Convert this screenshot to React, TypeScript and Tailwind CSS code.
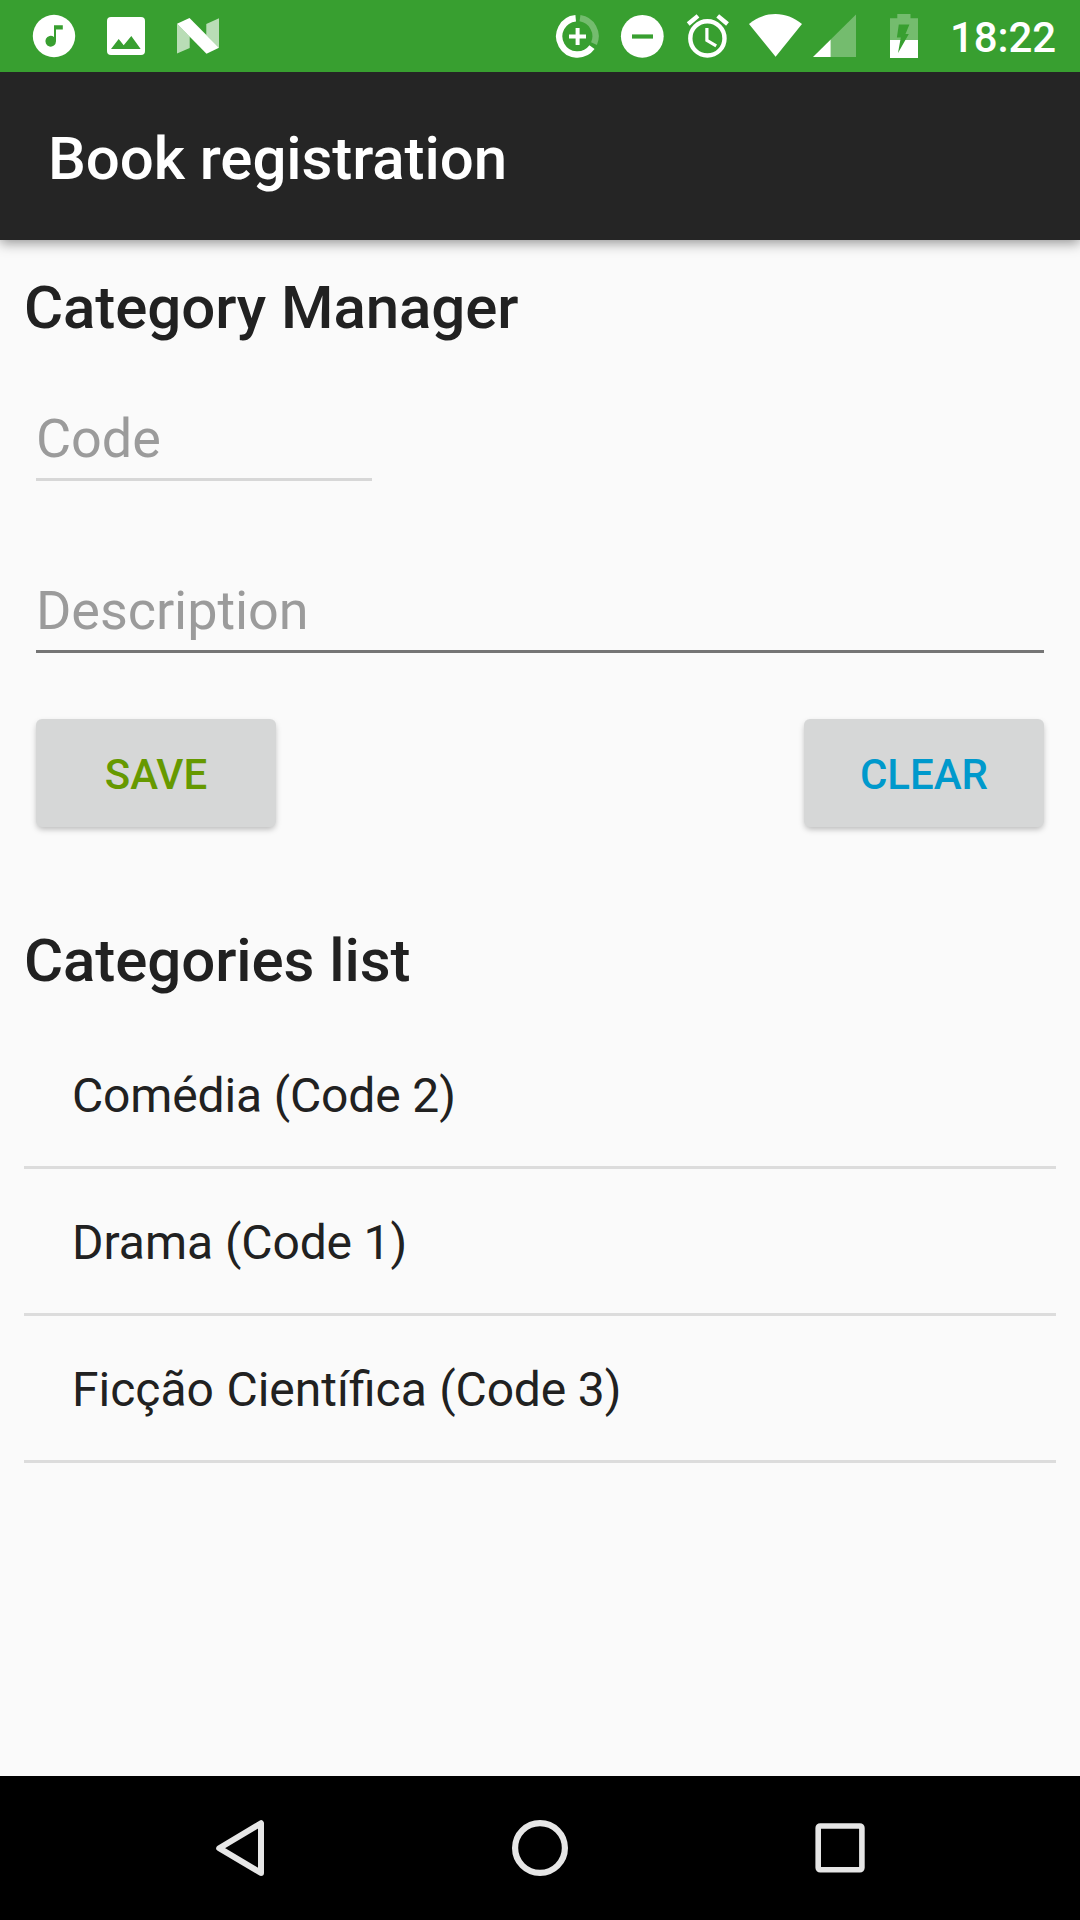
import React from "react";

type IconProps = { x: number; w: number; children: React.ReactNode };

/* Status bar glyph: a full-height slice of the 72px bar, starting at x. */
function StatusIcon({ x, w, children }: IconProps) {
  return (
    <svg width={w} height={72} viewBox={`${x} 0 ${w} 72`} fill="#fff" className="block shrink-0">
      {children}
    </svg>
  );
}

function StatusBar() {
  return (
    <header className="relative z-20 flex h-[72px] items-center justify-between bg-[#389f30] pr-[24px] pl-[32px]">
      <div className="flex gap-[26px]">
        <StatusIcon x={32} w={44}>
          <circle cx="54" cy="36" r="21.2" />
          <path fill="#389f30" d="M54 25.2h8.8v4.2h-6.8v11.9a5.3 5.4 0 1 1-2-4.3z" />
        </StatusIcon>
        <StatusIcon x={102} w={48}>
          <rect x="107" y="17" width="38" height="38" rx="4" />
          <path fill="#389f30" d="M111 49l7.7-10 5 6.3 7.6-9.3 9.4 13z" />
        </StatusIcon>
        <StatusIcon x={176} w={44}>
          <path fillOpacity="0.65" d="M177 23.7V53.5L189.7 48V36.4zM219 18.3L206.3 24V35L219 47.7z" />
          <path d="M177 23.7L189.5 18 219 47.7 206.5 53.7z" />
        </StatusIcon>
      </div>
      <div className="flex items-center">
        <StatusIcon x={555} w={45}>
          <path fill="none" stroke="#fff" strokeWidth="6.4" d="M575.7 18.2A18.2 18.2 0 1 0 592 47.2" />
          <path fill="none" stroke="#fff" strokeOpacity="0.3" strokeWidth="6.4" d="M580 18.2A18.2 18.2 0 0 1 594 43.6" />
          <path d="M575.6 28h4v6.5h6.4v4h-6.4V45h-4v-6.5H569v-4h6.6z" />
        </StatusIcon>
        <StatusIcon x={600} w={84}>
          <circle cx="642.3" cy="36.3" r="21.4" />
          <path fill="#389f30" d="M632 34.4h21v4.2h-21z" />
        </StatusIcon>
        <StatusIcon x={684} w={60}>
          <circle cx="707.4" cy="38.4" r="17.1" fill="none" stroke="#fff" strokeWidth="4.4" />
          <path fill="none" stroke="#fff" strokeWidth="3.2" d="M706.9 28v12.4l9.3 5.4" />
          <path fill="none" stroke="#fff" strokeWidth="4.4" d="M688.2 24l9.8-8.1M717.7 15.9l9.8 8.1" />
        </StatusIcon>
        <StatusIcon x={744} w={62}>
          <path d="M775.6 56.7L749 24C757 17.4 766 14 775.5 14S794 17.4 802 24z" />
        </StatusIcon>
        <StatusIcon x={806} w={60}>
          <path fillOpacity="0.3" d="M830.7 39.5L856 14.5V57H830.7z" />
          <path d="M813 57L830.7 39.5V57z" />
        </StatusIcon>
        <StatusIcon x={866} w={84}>
          <path fillOpacity="0.3" d="M890 40V18.2h7.3V14h13.2v4.2H918V40z" />
          <path d="M890 40h28v18h-28z" />
          <path fill="#389f30" d="M898.8 24.6h10.6L905.5 34h3.3L898 53l2.8-15.4h-3.9z" />
        </StatusIcon>
        <time className="w-[106px] pt-[3px] text-[42px] leading-[48px] font-medium tracking-[-0.1px] whitespace-nowrap text-white">
          18:22
        </time>
      </div>
    </header>
  );
}

function AppBar() {
  return (
    <div className="relative z-10 flex h-[168px] items-center bg-[#252525] px-[48px] pt-[5px] shadow-[0_3px_12px_rgba(0,0,0,0.42)]">
      <h1 className="text-[60px] leading-[72px] font-medium tracking-[-0.08px] text-white">Book registration</h1>
    </div>
  );
}

function Field({ label, className }: { label: string; className: string }) {
  return (
    <label
      className={`block h-[75px] border-b-[3px] text-[54px] leading-[66px] tracking-[-0.08px] text-[#9b9b9b] ${className}`}
    >
      {label}
    </label>
  );
}

function ActionButton({ label, className }: { label: string; className: string }) {
  return (
    <button
      className={`h-[108px] w-[240px] rounded-[6px] bg-[#d6d7d7] pt-[3px] text-[42px] leading-[48px] font-medium shadow-[0_3px_6px_-1px_rgba(0,0,0,0.28)] ${className}`}
    >
      {label}
    </button>
  );
}

const categories = [
  { name: "Comédia", code: 2, spacing: "tracking-[-0.15px]" },
  { name: "Drama", code: 1, spacing: "tracking-normal" },
  { name: "Ficção Científica", code: 3, spacing: "[word-spacing:0.6px]" },
];

function NavBar() {
  return (
    <nav className="flex h-[144px] items-center justify-between bg-black px-[210px]">
      <svg width="60" height="72" viewBox="210 1812 60 72" fill="none" stroke="#e6e6e6" strokeWidth="6">
        <path strokeLinejoin="round" d="M219.2 1848.2L261 1823.2V1873z" />
      </svg>
      <svg width="60" height="72" viewBox="510 1812 60 72" fill="none" stroke="#e6e6e6" strokeWidth="6.2">
        <circle cx="540" cy="1848" r="24.9" />
      </svg>
      <svg width="60" height="72" viewBox="810 1812 60 72" fill="none" stroke="#e6e6e6" strokeWidth="5.6">
        <rect x="818.2" y="1826" width="43.7" height="43.8" rx="2" />
      </svg>
    </nav>
  );
}

export default function App() {
  return (
    <div className="flex h-[1920px] w-[1080px] flex-col bg-[#fafafa] font-[Roboto,sans-serif] text-[#212121]">
      <StatusBar />
      <AppBar />
      <main className="flex-1 px-[24px] pt-[32px]">
        <h2 className="text-[60px] leading-[72px] font-medium tracking-[-0.08px]">Category Manager</h2>
        <div className="px-[12px]">
          <Field label="Code" className="mt-[62px] w-[336px] border-[#d7d7d7]" />
          <Field label="Description" className="mt-[97px] border-[#757575]" />
          <div className="mt-[66px] flex justify-between">
            <ActionButton label="SAVE" className="text-[#669900]" />
            <ActionButton label="CLEAR" className="text-[#0099cc]" />
          </div>
        </div>
        <h2 className="mt-[98px] text-[60px] leading-[72px] font-medium tracking-[-0.08px]">Categories list</h2>
        <ul className="mt-[25px]">
          {categories.map(({ name, code, spacing }) => (
            <li
              key={code}
              className="h-[147px] border-b-[3px] border-[#dcdcdc] px-[48px] pt-[43px] text-[48px] leading-[61px]"
            >
              <span className={spacing}>{name} </span>
              <span className="tracking-[-0.15px]">{`(Code ${code})`}</span>
            </li>
          ))}
        </ul>
      </main>
      <NavBar />
    </div>
  );
}
